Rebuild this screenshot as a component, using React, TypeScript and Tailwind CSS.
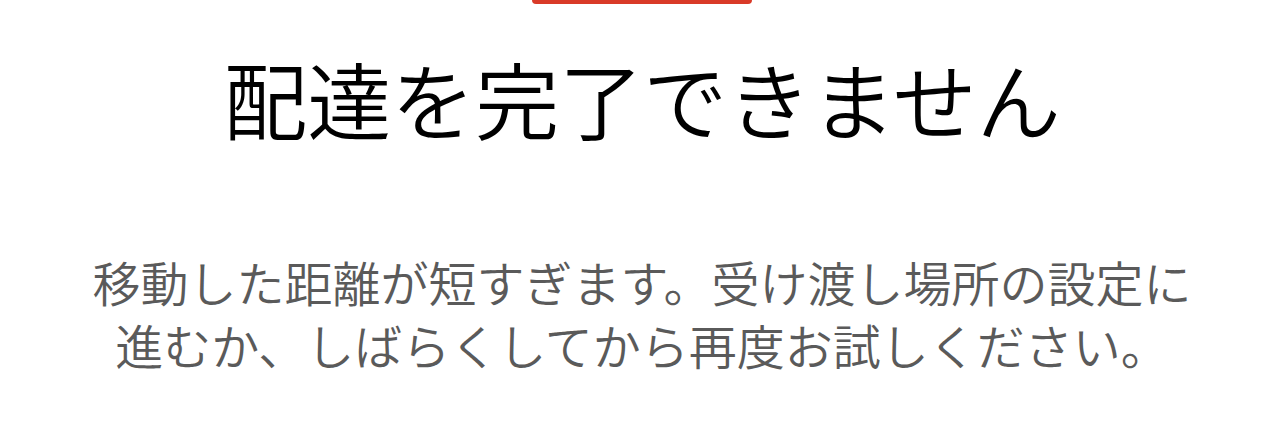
export default function App() {
  return (
    <div
      className="w-[1284px] h-[427px] bg-white flex flex-col items-center overflow-hidden"
      style={{ fontFamily: '"Noto Sans CJK JP", "Noto Sans", sans-serif' }}
    >
      {/* top accent */}
      <div className="w-[220px] h-[4px] bg-[#d93a28] rounded-b-[4px]" />

      <h1 className="mt-[44px] text-[84px] leading-[100px] font-[350] text-black text-center">
        配達を完了できません
      </h1>

      <p className="mt-[102px] text-[48px] leading-[63px] font-[350] text-[#5a5a5a] text-center">
        移動した距離が短すぎます。受け渡し場所の設定に
        <br />
        進むか、しばらくしてから再度お試しください。
      </p>
    </div>
  );
}
